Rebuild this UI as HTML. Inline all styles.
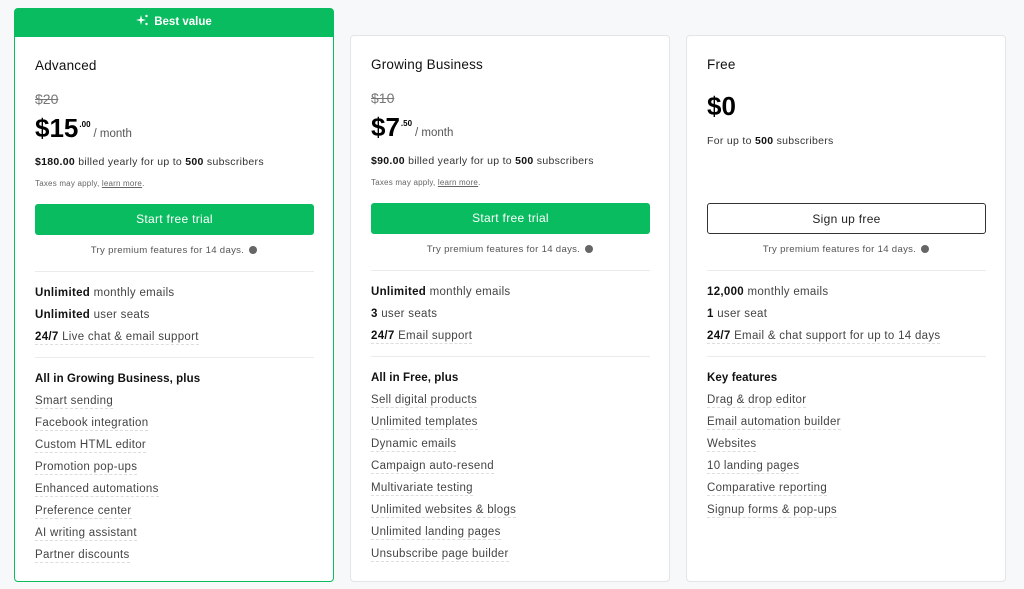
<!DOCTYPE html>
<html><head><meta charset="utf-8"><style>
*{margin:0;padding:0;box-sizing:border-box}
body{width:1024px;height:589px;background:#f7f8f9;font-family:"Liberation Sans",sans-serif;color:#1a1a1a;position:relative;overflow:hidden}
.card{position:absolute;background:#fff;border:1px solid #e3e5e8;border-radius:4px;width:320px}
.l{position:absolute;left:20px;white-space:nowrap;height:18px;line-height:18px}
.t{font-size:13.5px;color:#111;letter-spacing:0.2px}
.old{font-size:14px;color:#777;text-decoration:line-through}
.big{font-size:26px;font-weight:bold;height:30px;line-height:30px;color:#000}
.big sup{font-size:8px;vertical-align:top;position:relative;top:-3px;margin-left:1px}
.big span{font-size:11.5px;font-weight:normal;color:#555;margin-left:3px}
.s{font-size:10.5px;color:#333;letter-spacing:0.3px}
.s b{color:#111}
.tx{font-size:8px;color:#666;letter-spacing:0.2px}
.tx u{text-decoration:underline}
.btn{position:absolute;left:20px;width:279px;height:31px;border-radius:3px;background:#09bc5f;color:#fff;font-size:12px;text-align:center;line-height:31px;letter-spacing:0.3px}
.btn.o{background:#fff;border:1px solid #333;color:#222}
.try{position:absolute;left:0;width:100%;text-align:center;font-size:9.6px;color:#555;height:18px;line-height:18px;letter-spacing:0.3px}
.try i{display:inline-block;width:8px;height:8px;border-radius:50%;background:#666;margin-left:5px;vertical-align:-1px}
.hr{position:absolute;left:20px;width:279px;height:1px;background:#ebebeb}
.f{font-size:11.5px;color:#444;letter-spacing:0.3px}
.f b{color:#111}
.f span{border-bottom:1px dashed #ddd;padding-bottom:1px}
.h{font-size:11.5px;font-weight:bold;color:#111;letter-spacing:0.1px}
</style></head><body>

<div class="card" style="left:14px;top:8px;height:574px;border:1.5px solid #09bc5f;border-radius:4px">
<div style="position:absolute;left:0;top:0;width:100%;height:28px;background:#09bc5f;color:#fff;font-size:11.5px;font-weight:bold;text-align:center;line-height:27px">
<svg width="12" height="12" viewBox="0 0 12 12" style="vertical-align:-1px;margin-right:6px"><path d="M5 1 L6 5 L10 6 L6 7 L5 11 L4 7 L0 6 L4 5 Z" fill="#fff"/><circle cx="10.5" cy="2" r="1.2" fill="#fff"/><circle cx="10.5" cy="10" r="1.2" fill="#fff"/></svg>Best value</div>
<div style="position:absolute;left:0;top:28px;width:100%">
<div class="l t" style="top:20px">Advanced</div>
<div class="l old" style="top:53px">$20</div>
<div class="l big" style="top:76px">$15<sup>.00</sup><span>/ month</span></div>
<div class="l s" style="top:116px"><b>$180.00</b> billed yearly for up to <b>500</b> subscribers</div>
<div class="l tx" style="top:138px">Taxes may apply, <u>learn more</u>.</div>
<div class="btn" style="top:167px">Start free trial</div>
<div class="try" style="top:205px">Try premium features for 14 days.<i></i></div>
<div class="hr" style="top:234px"></div>
<div class="l f" style="top:247px"><b>Unlimited</b> monthly emails</div>
<div class="l f" style="top:269px"><b>Unlimited</b> user seats</div>
<div class="l f" style="top:291px"><span><b>24/7</b> Live chat &amp; email support</span></div>
<div class="hr" style="top:320px"></div>
<div class="l h" style="top:333px">All in Growing Business, plus</div>
<div class="l f" style="top:355px"><span>Smart sending</span></div>
<div class="l f" style="top:377px"><span>Facebook integration</span></div>
<div class="l f" style="top:399px"><span>Custom HTML editor</span></div>
<div class="l f" style="top:421px"><span>Promotion pop-ups</span></div>
<div class="l f" style="top:443px"><span>Enhanced automations</span></div>
<div class="l f" style="top:465px"><span>Preference center</span></div>
<div class="l f" style="top:487px"><span>AI writing assistant</span></div>
<div class="l f" style="top:509px"><span>Partner discounts</span></div>
</div></div>

<div class="card" style="left:350px;top:35px;height:547px">
<div class="l t" style="top:20px">Growing Business</div>
<div class="l old" style="top:53px">$10</div>
<div class="l big" style="top:76px">$7<sup>.50</sup><span>/ month</span></div>
<div class="l s" style="top:116px"><b>$90.00</b> billed yearly for up to <b>500</b> subscribers</div>
<div class="l tx" style="top:138px">Taxes may apply, <u>learn more</u>.</div>
<div class="btn" style="top:167px">Start free trial</div>
<div class="try" style="top:205px">Try premium features for 14 days.<i></i></div>
<div class="hr" style="top:234px"></div>
<div class="l f" style="top:247px"><b>Unlimited</b> monthly emails</div>
<div class="l f" style="top:269px"><b>3</b> user seats</div>
<div class="l f" style="top:291px"><span><b>24/7</b> Email support</span></div>
<div class="hr" style="top:320px"></div>
<div class="l h" style="top:333px">All in Free, plus</div>
<div class="l f" style="top:355px"><span>Sell digital products</span></div>
<div class="l f" style="top:377px"><span>Unlimited templates</span></div>
<div class="l f" style="top:399px"><span>Dynamic emails</span></div>
<div class="l f" style="top:421px"><span>Campaign auto-resend</span></div>
<div class="l f" style="top:443px"><span>Multivariate testing</span></div>
<div class="l f" style="top:465px"><span>Unlimited websites &amp; blogs</span></div>
<div class="l f" style="top:487px"><span>Unlimited landing pages</span></div>
<div class="l f" style="top:509px"><span>Unsubscribe page builder</span></div>
</div>

<div class="card" style="left:686px;top:35px;height:547px">
<div class="l t" style="top:20px">Free</div>
<div class="l big" style="top:55px">$0</div>
<div class="l s" style="top:96px">For up to <b>500</b> subscribers</div>
<div class="btn o" style="top:167px">Sign up free</div>
<div class="try" style="top:205px">Try premium features for 14 days.<i></i></div>
<div class="hr" style="top:234px"></div>
<div class="l f" style="top:247px"><b>12,000</b> monthly emails</div>
<div class="l f" style="top:269px"><b>1</b> user seat</div>
<div class="l f" style="top:291px"><span><b>24/7</b> Email &amp; chat support for up to 14 days</span></div>
<div class="hr" style="top:320px"></div>
<div class="l h" style="top:333px">Key features</div>
<div class="l f" style="top:355px"><span>Drag &amp; drop editor</span></div>
<div class="l f" style="top:377px"><span>Email automation builder</span></div>
<div class="l f" style="top:399px"><span>Websites</span></div>
<div class="l f" style="top:421px"><span>10 landing pages</span></div>
<div class="l f" style="top:443px"><span>Comparative reporting</span></div>
<div class="l f" style="top:465px"><span>Signup forms &amp; pop-ups</span></div>
</div>
</body></html>
